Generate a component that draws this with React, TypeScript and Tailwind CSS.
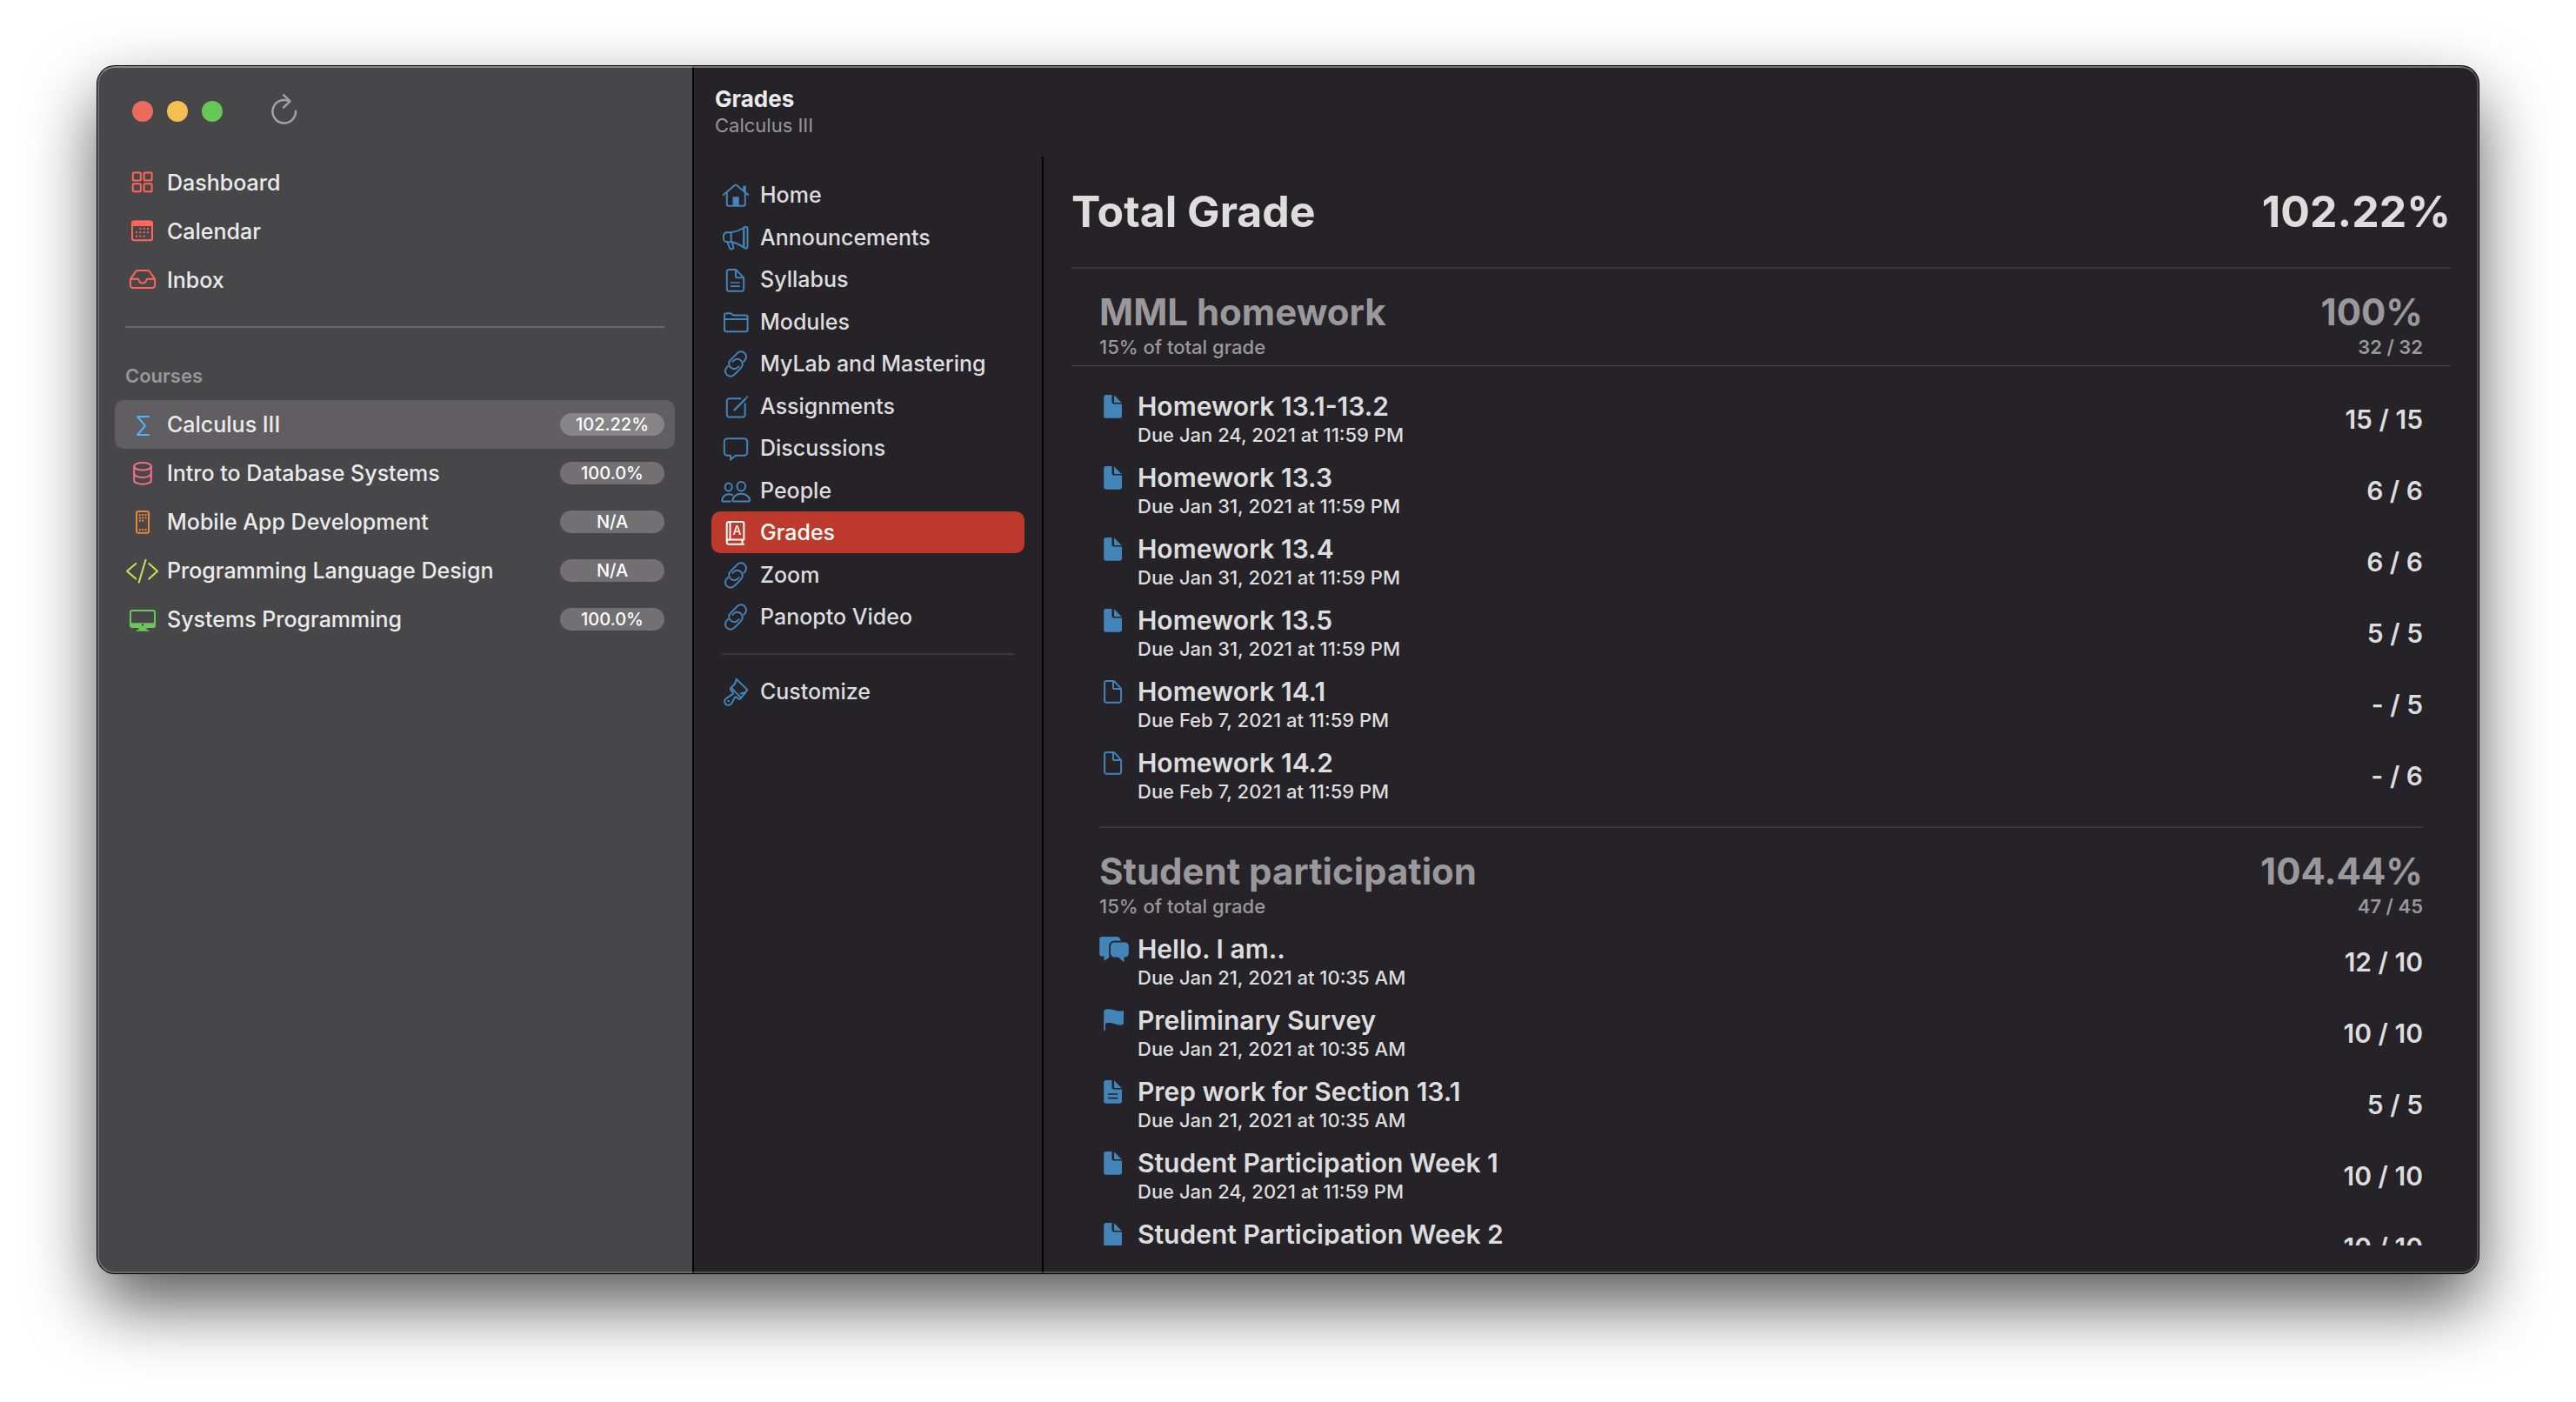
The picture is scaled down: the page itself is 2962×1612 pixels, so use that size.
import type { ReactNode } from 'react';

/* ---------- icon helpers: every icon sits in a 40×40 box ---------- */

function Icon({ children, className = '' }: { children: ReactNode; className?: string }) {
  return (
    <svg
      viewBox="0 0 40 40"
      className={`h-10 w-10 shrink-0 overflow-visible ${className}`}
      fill="none"
      stroke="currentColor"
      strokeWidth="2"
      strokeLinecap="round"
      strokeLinejoin="round"
      aria-hidden="true"
    >
      {children}
    </svg>
  );
}

function Dots({ points, size = 2 }: { points: [number, number][]; size?: number }) {
  return (
    <g fill="currentColor" stroke="none">
      {points.map(([x, y]) => (
        <rect key={`${x}-${y}`} x={x - size / 2} y={y - size / 2} width={size} height={size} />
      ))}
    </g>
  );
}

const DashboardIcon = () => (
  <Icon className="text-[#ff665b]">
    <rect x="8.8" y="8.6" width="9" height="9" rx="1" />
    <rect x="21.6" y="8.6" width="9" height="9" rx="1" />
    <rect x="8.8" y="21.3" width="9" height="9" rx="1" />
    <rect x="21.6" y="21.3" width="9" height="9" rx="1" />
  </Icon>
);

const CalendarIcon = () => (
  <Icon className="text-[#ff665b]">
    <rect x="8" y="8.6" width="23" height="21.6" rx="2.2" />
    <path d="M7.5 10a2.3 2.3 0 0 1 2.3-2.3h19.4A2.3 2.3 0 0 1 31.5 10v4H7.5z" fill="currentColor" stroke="none" />
    <Dots
      points={[
        [17.3, 16.9], [21.7, 16.9], [26, 16.9],
        [13, 21.2], [17.3, 21.2], [21.7, 21.2], [26, 21.2],
        [13, 25.6], [17.3, 25.6], [21.7, 25.6],
      ]}
    />
  </Icon>
);

const InboxIcon = () => (
  <Icon className="text-[#ff665b]">
    <path d="M6 18.8 12 10.3Q12.9 9 14.5 9h11Q27.1 9 28 10.3L34 18.8V26a3 3 0 0 1-3 3H9a3 3 0 0 1-3-3z" />
    <path d="M6 18.8h8.2q1.3 0 1.5 1.3a4.4 4.4 0 0 0 8.6 0q.2-1.3 1.5-1.3H34" />
  </Icon>
);

const SigmaIcon = () => (
  <Icon className="text-[#4bb6f5]">
    <path d="M27 11H14l9 10.5L14 32h13" />
  </Icon>
);

const DatabaseIcon = () => (
  <Icon className="text-[#f0708c]">
    <ellipse cx="20" cy="12.2" rx="9.8" ry="4.3" />
    <path d="M10.2 12.2v16.2c0 2.4 4.4 4.3 9.8 4.3s9.8-1.9 9.8-4.3V12.2" />
    <path d="M10.2 20.6c0 2.4 4.4 4.3 9.8 4.3s9.8-1.9 9.8-4.3" />
  </Icon>
);

const PhoneIcon = () => (
  <Icon className="text-[#e8873a]">
    <rect x="13" y="8" width="14" height="24.8" rx="2.2" />
    <Dots
      points={[
        [16.8, 12], [20.1, 12], [23.5, 12],
        [16.8, 15.4], [20.1, 15.4], [23.5, 15.4],
        [16.8, 18.7], [20.1, 18.7],
        [16.8, 29], [20.1, 29], [23.5, 29],
      ]}
    />
  </Icon>
);

const CodeIcon = () => (
  <Icon className="text-[#d3e04c]">
    <path d="M12.3 12 2 20.7l10.3 8.9M27.3 12 37 20.7l-9.7 8.9M23.5 7.8l-7.8 25.8" />
  </Icon>
);

const MonitorIcon = () => (
  <Icon className="text-[#6cc658]">
    <rect x="6" y="10" width="28" height="19" rx="2" />
    <path d="M6 24.3h28V27a2 2 0 0 1-2 2H8a2 2 0 0 1-2-2z" fill="currentColor" stroke="none" />
    <path d="M15.6 29.5h8.8v2.2l2.9 1v1H12.7v-1l2.9-1z" fill="currentColor" stroke="none" />
    <circle cx="20" cy="26.5" r="1.2" fill="#474749" stroke="none" />
  </Icon>
);

const HomeIcon = () => (
  <Icon>
    <path d="M5.7 20 18.9 8.9q1.1-.9 2.2 0L34.3 20" />
    <path d="M9.8 17v13.8a2 2 0 0 0 2 2h17a2 2 0 0 0 2-2V10.5h-1.6v4" />
    <path d="M16.5 33V23.2q0-.9.9-.9h5.5q.9 0 .9.9V33z" fill="currentColor" stroke="none" />
  </Icon>
);

const MegaphoneIcon = () => (
  <Icon>
    <path d="M14.7 14.3H10A4 4 0 0 0 6 18.3v3a4 4 0 0 0 4 4h4.7q7.5 1.2 14.6 6V9q-7.1 4.2-14.6 5.3z" />
    <path d="M14.7 14.3v11" />
    <rect x="29.3" y="7.8" width="4.2" height="24.8" rx="2.1" />
    <path d="m10.5 25.5 2.7 7q.5 1.2 1.8 1 2.8-.3 2.2-2.6L15.7 25.5" />
  </Icon>
);

const DocTextIcon = () => (
  <Icon>
    <path d="M19.5 9H12a2.2 2.2 0 0 0-2.2 2.2v20.3a2.2 2.2 0 0 0 2.2 2.2h15a2.2 2.2 0 0 0 2.2-2.2V19q0-.8-.6-1.4l-7.8-8Q20.3 9 19.5 9z" />
    <path d="M20 9.3v7.5q0 1.5 1.5 1.5h7.3" />
    <path d="M14.5 24h9.7M14.5 28.2h9.7" strokeWidth="1.7" />
  </Icon>
);

const FolderIcon = () => (
  <Icon>
    <path d="M7 29V12.5a2.3 2.3 0 0 1 2.3-2.3h4.2q1 0 1.8.7l1.2 1q.8.7 1.8.7h13a2.3 2.3 0 0 1 2.3 2.3V29a2.3 2.3 0 0 1-2.3 2.3h-22A2.3 2.3 0 0 1 7 29zM7 17h26.6" />
  </Icon>
);

const LinkIcon = () => (
  <Icon>
    <g transform="rotate(-45 20 20.5)">
      <path d="M28.5 25H30a6 6 0 0 0 0-12H19a6 6 0 0 0 0 12h1.5" />
      <path d="M11.5 16H10a6 6 0 0 0 0 12h11a6 6 0 0 0 0-12h-1.5" />
    </g>
  </Icon>
);

const ComposeIcon = () => (
  <Icon>
    <path d="M25.5 11.3H12.5A2.7 2.7 0 0 0 9.8 14v15.8a2.7 2.7 0 0 0 2.7 2.7H28a2.7 2.7 0 0 0 2.7-2.7V17.2" />
    <path d="M18.5 24.3 31.3 11.5M33 9.5l.1-.1" strokeWidth="2.4" />
  </Icon>
);

const BubbleIcon = () => (
  <Icon>
    <path d="M10.5 9.2h19a3.7 3.7 0 0 1 3.7 3.7v12.2a3.7 3.7 0 0 1-3.7 3.7H19.8l-5.7 4.8v-4.8h-3.6a3.7 3.7 0 0 1-3.7-3.7V12.9a3.7 3.7 0 0 1 3.7-3.7z" />
  </Icon>
);

const PeopleIcon = () => (
  <Icon>
    <ellipse cx="11.7" cy="16" rx="4" ry="4.5" />
    <ellipse cx="26.3" cy="15.2" rx="4.8" ry="5.2" />
    <path d="M17.8 32.6q-1.4 0-1.3-1.6c.3-4 4.3-7.2 9.8-7.2s9.5 3.2 9.8 7.2q.1 1.6-1.3 1.6z" />
    <path d="M13.8 32.6H5.5q-1.2 0-1.2-1.5c.2-3.8 3.5-6.9 7.6-6.9q2.5 0 4.3 1" />
  </Icon>
);

const GradebookIcon = () => (
  <Icon>
    <path d="M29.3 33.8H12.2A2.5 2.5 0 0 1 9.7 31.3V10.5a2.5 2.5 0 0 1 2.5-2.5h15.2a2 2 0 0 1 2 2v18.5H12.2A2.5 2.5 0 0 0 9.7 31M13.5 8.5v19.5M27.5 29v4.3" />
    <text
      x="21.5"
      y="22.8"
      textAnchor="middle"
      className="text-[14px] font-medium"
      fill="currentColor"
      stroke="none"
    >
      A
    </text>
  </Icon>
);

const BrushIcon = () => (
  <Icon>
    <path d="M20.7 5.8 32.8 17.6a1 1 0 0 1 0 1.4l-2.2 2.2-5 1.3M20.7 5.8q-1 5.5-3.8 7.7l-2.2 2.2 11.4 11.7 5.5-6.5" />
    <path d="M14.7 15.7q-1.5 1.7 0 3.2l1.9 2.1q1 1.2-.2 2.2l-7.2 4.6a4.3 4.3 0 1 0 5.9 5.9l3.8-6.8q1-1.4 2.2-.2l1.6 1.6q1.7 1.5 3.4-.9" />
    <circle cx="11.6" cy="31" r="1.3" fill="currentColor" stroke="none" />
  </Icon>
);

/* ---------- assignment icons ---------- */

function DocFillShape() {
  return (
    <g fill="currentColor" stroke="none">
      <path d="M12 8H18.5v7.7q0 2.8 2.8 2.8H30V32a2.8 2.8 0 0 1-2.8 2.8H12a2.8 2.8 0 0 1-2.8-2.8V10.8A2.8 2.8 0 0 1 12 8z" />
      <path d="M21 8.3 29.7 17H22q-1 0-1-1z" />
    </g>
  );
}

const DocFillIcon = () => (
  <Icon className="text-[#4384b9]">
    <DocFillShape />
  </Icon>
);

const DocTextFillIcon = () => (
  <Icon className="text-[#4384b9]">
    <DocFillShape />
    <path d="M14.7 24h10M14.7 28.6h10" stroke="#252328" strokeWidth="1.6" />
  </Icon>
);

const DocOutlineIcon = () => (
  <Icon className="text-[#4384b9]">
    <path d="M19.8 9H12.3A2.2 2.2 0 0 0 10.1 11.2v20.3a2.2 2.2 0 0 0 2.2 2.2h14.6a2.2 2.2 0 0 0 2.2-2.2V18.5q0-.8-.6-1.4l-7-7.5Q20.8 9 19.8 9z" />
    <path d="M20 9.3v7.2q0 1.6 1.6 1.6h7.2" />
  </Icon>
);

const BubblesFillIcon = () => (
  <Icon className="text-[#4384b9]">
    <path
      d="M7 7h17.5a4.3 4.3 0 0 1 4.1 4.7H21a5.8 5.8 0 0 0-5.8 5.8v11q0 1.6.4 2.3L10.3 34.5q-.8.3-.8-.6V29.5H7a2.8 2.8 0 0 1-2.8-2.8V9.8A2.8 2.8 0 0 1 7 7z"
      fill="currentColor"
      stroke="none"
    />
    <path
      d="M21.2 13.4h12.4a4.2 4.2 0 0 1 4.2 4.2v8.7a4.2 4.2 0 0 1-4.2 4.2H32.5v5q0 1-.9.3L25.8 30.5h-4.6a4.2 4.2 0 0 1-4.2-4.2v-8.7a4.2 4.2 0 0 1 4.2-4.2z"
      fill="currentColor"
      stroke="none"
    />
  </Icon>
);

const FlagFillIcon = () => (
  <Icon className="text-[#4384b9]">
    <path
      d="M9.2 10.2Q10 8.2 15 8.3c5.5.1 8 2.4 12.5 2.3q2.5 0 3.7-.5.8-.2.8.7v13.5q0 1.5-1.6 1.9-1.4.3-3.4.2c-4.5-.1-7-2.3-12-2.3q-2.7 0-4 .6v7.3a.9.9 0 0 1-1.8 0z"
      fill="currentColor"
      stroke="none"
    />
  </Icon>
);

/* ---------- data ---------- */

const primaryNav = [
  { label: 'Dashboard', icon: <DashboardIcon /> },
  { label: 'Calendar', icon: <CalendarIcon /> },
  { label: 'Inbox', icon: <InboxIcon /> },
];

const courses = [
  { label: 'Calculus III', icon: <SigmaIcon />, grade: '102.22%', selected: true },
  { label: 'Intro to Database Systems', icon: <DatabaseIcon />, grade: '100.0%' },
  { label: 'Mobile App Development', icon: <PhoneIcon />, grade: 'N/A' },
  { label: 'Programming Language Design', icon: <CodeIcon />, grade: 'N/A' },
  { label: 'Systems Programming', icon: <MonitorIcon />, grade: '100.0%' },
];

const courseNav = [
  { label: 'Home', icon: <HomeIcon /> },
  { label: 'Announcements', icon: <MegaphoneIcon /> },
  { label: 'Syllabus', icon: <DocTextIcon /> },
  { label: 'Modules', icon: <FolderIcon /> },
  { label: 'MyLab and Mastering', icon: <LinkIcon /> },
  { label: 'Assignments', icon: <ComposeIcon /> },
  { label: 'Discussions', icon: <BubbleIcon /> },
  { label: 'People', icon: <PeopleIcon /> },
  { label: 'Grades', icon: <GradebookIcon />, selected: true },
  { label: 'Zoom', icon: <LinkIcon /> },
  { label: 'Panopto Video', icon: <LinkIcon /> },
];

type Assignment = { title: string; due?: string; score: string; icon: ReactNode };

const homework: Assignment[] = [
  { title: 'Homework 13.1-13.2', due: 'Due Jan 24, 2021 at 11:59 PM', score: '15 / 15', icon: <DocFillIcon /> },
  { title: 'Homework 13.3', due: 'Due Jan 31, 2021 at 11:59 PM', score: '6 / 6', icon: <DocFillIcon /> },
  { title: 'Homework 13.4', due: 'Due Jan 31, 2021 at 11:59 PM', score: '6 / 6', icon: <DocFillIcon /> },
  { title: 'Homework 13.5', due: 'Due Jan 31, 2021 at 11:59 PM', score: '5 / 5', icon: <DocFillIcon /> },
  { title: 'Homework 14.1', due: 'Due Feb 7, 2021 at 11:59 PM', score: '- / 5', icon: <DocOutlineIcon /> },
  { title: 'Homework 14.2', due: 'Due Feb 7, 2021 at 11:59 PM', score: '- / 6', icon: <DocOutlineIcon /> },
];

const participation: Assignment[] = [
  { title: 'Hello. I am..', due: 'Due Jan 21, 2021 at 10:35 AM', score: '12 / 10', icon: <BubblesFillIcon /> },
  { title: 'Preliminary Survey', due: 'Due Jan 21, 2021 at 10:35 AM', score: '10 / 10', icon: <FlagFillIcon /> },
  { title: 'Prep work for Section 13.1', due: 'Due Jan 21, 2021 at 10:35 AM', score: '5 / 5', icon: <DocTextFillIcon /> },
  { title: 'Student Participation Week 1', due: 'Due Jan 24, 2021 at 11:59 PM', score: '10 / 10', icon: <DocFillIcon /> },
  { title: 'Student Participation Week 2', score: '10 / 10', icon: <DocFillIcon /> },
];

/* ---------- panels ---------- */

function Sidebar() {
  return (
    <aside className="flex w-[686px] shrink-0 flex-col border-r-2 border-black bg-[#474749] px-5 text-[#ebebeb]">
      <div className="mb-0.5 flex h-[104px] shrink-0 items-center pl-5">
        <div className="flex gap-4">
          <button aria-label="Close" className="size-6 rounded-full bg-[#ec6b5f]" />
          <button aria-label="Minimize" className="size-6 rounded-full bg-[#f4be50]" />
          <button aria-label="Zoom window" className="size-6 rounded-full bg-[#66c656]" />
        </div>
        <button aria-label="Refresh" className="ml-14 text-[#a2a2a4]">
          <svg viewBox="0 0 30 40" className="h-10 w-[30px]" fill="none" stroke="currentColor" strokeWidth="2.5" strokeLinecap="round" strokeLinejoin="round" aria-hidden="true">
            <path d="M28 19.8A13.3 13.3 0 1 1 20.5 8.3" />
            <path d="M14.3 1.3 21.5 8.3 14 15.6" />
          </svg>
        </button>
      </div>

      <nav aria-label="Main">
        <ul>
          {primaryNav.map((item) => (
            <li key={item.label}>
              <a href="#" className="flex h-14 items-center gap-2 px-3 text-[25px] leading-9 font-medium">
                {item.icon}
                {item.label}
              </a>
            </li>
          ))}
        </ul>
      </nav>

      <hr className="mx-3 mt-[25px] border-t-2 border-[#68686a]" />

      <h2 className="mx-3 mt-[39px] mb-3 text-[22px] leading-8 font-semibold text-[#98989a]">Courses</h2>
      <nav aria-label="Courses">
        <ul>
          {courses.map((course) => (
            <li key={course.label}>
              <a
                href="#"
                aria-current={course.selected ? 'page' : undefined}
                className={`flex h-14 items-center gap-2 rounded-[10px] px-3 text-[25px] leading-9 font-medium ${course.selected ? 'bg-[#605e61]' : ''}`}
              >
                {course.icon}
                <span className="flex-1 truncate">{course.label}</span>
                <span
                  className={`flex h-[26px] w-[120px] shrink-0 items-center justify-center rounded-full text-[20px] leading-6 font-medium text-white ${course.selected ? 'bg-[#868487]' : 'bg-[#727073]'}`}
                >
                  {course.grade}
                </span>
              </a>
            </li>
          ))}
        </ul>
      </nav>
    </aside>
  );
}

function CourseNav() {
  return (
    <nav aria-label="Course" className="w-[402px] shrink-0 border-r-2 border-black px-5 pt-5 text-[25px] leading-9 font-medium">
      <ul className="flex h-[533px] flex-col justify-between">
        {courseNav.map((item) => (
          <li key={item.label}>
            <a
              href="#"
              aria-current={item.selected ? 'page' : undefined}
              className={`flex h-12 items-center gap-2 rounded-[10px] px-2 ${item.selected ? 'bg-[#bc392c] text-white' : ''}`}
            >
              <span className={item.selected ? 'text-white' : 'text-[#4384b9]'}>{item.icon}</span>
              {item.label}
            </a>
          </li>
        ))}
      </ul>
      <hr className="mx-3 my-[18px] border-t-2 border-[#39373c]" />
      <button className="flex h-12 w-full items-center gap-2 px-2">
        <span className="text-[#4384b9]">
          <BrushIcon />
        </span>
        Customize
      </button>
    </nav>
  );
}

function GroupHeader({ title, weight, percent, points }: { title: string; weight: string; percent: string; points: string }) {
  return (
    <header className="flex justify-between px-8 pt-6 text-[#9a989b]">
      <div>
        <h3 className="text-[42px] leading-[52px] font-bold">{title}</h3>
        <p className="text-[22px] leading-7 font-medium">{weight}</p>
      </div>
      <div className="text-right">
        <p className="text-[42px] leading-[52px] font-bold">{percent}</p>
        <p className="text-[22px] leading-7 font-semibold">{points}</p>
      </div>
    </header>
  );
}

function AssignmentList({ items }: { items: Assignment[] }) {
  return (
    <ul className="px-8">
      {items.map((item) => (
        <li key={item.title} className="flex h-[82px] items-center">
          <div className="-ml-1 self-start pt-[5px]">{item.icon}</div>
          <div className="ml-2 min-w-0 flex-1 self-start pt-2">
            <h4 className="text-[30px] leading-9 font-semibold">{item.title}</h4>
            {item.due && <p className="text-[22px] leading-[30px] font-medium">{item.due}</p>}
          </div>
          <p className="text-[30px] leading-9 font-semibold">{item.score}</p>
        </li>
      ))}
    </ul>
  );
}

function Grades() {
  return (
    <section aria-label="Grades" className="mb-8 min-w-0 flex-1 overflow-hidden px-8">
      <div className="flex justify-between border-b-2 border-[#39373c] py-[35px] text-[50px] leading-[57px] font-bold">
        <h2>Total Grade</h2>
        <p>102.22%</p>
      </div>

      <div className="border-b border-[#4a484c] pb-[7px]">
        <GroupHeader title="MML homework" weight="15% of total grade" percent="100%" points="32 / 32" />
      </div>
      <div className="pt-5">
        <AssignmentList items={homework} />
      </div>

      <hr className="mx-8 mt-[17px] border-t-2 border-[#39373c]" />
      <GroupHeader title="Student participation" weight="15% of total grade" percent="104.44%" points="47 / 45" />
      <div className="pt-[9px]">
        <AssignmentList items={participation} />
      </div>
    </section>
  );
}

export default function App() {
  return (
    <div className="h-screen bg-white px-28 pt-[76px] pb-[148px] font-['Inter',sans-serif]">
      <div className="relative flex h-full overflow-hidden rounded-[20px] bg-[#252328] text-[#dddddd] shadow-[0_0_0_1px_#000,0_36px_80px_rgba(0,0,0,0.66)]">
        <Sidebar />
        <div className="flex min-w-0 flex-1 flex-col">
          <header className="h-[104px] shrink-0 px-6 pt-[22px]">
            <h1 className="text-[26px] leading-8 font-bold text-[#ebebeb]">Grades</h1>
            <p className="text-[22px] leading-7 text-[#97959a]">Calculus III</p>
          </header>
          <main className="flex min-h-0 flex-1">
            <CourseNav />
            <Grades />
          </main>
        </div>
        <div className="pointer-events-none absolute inset-0 rounded-[20px] border-2 border-white/20 border-t-white/35" />
      </div>
    </div>
  );
}
